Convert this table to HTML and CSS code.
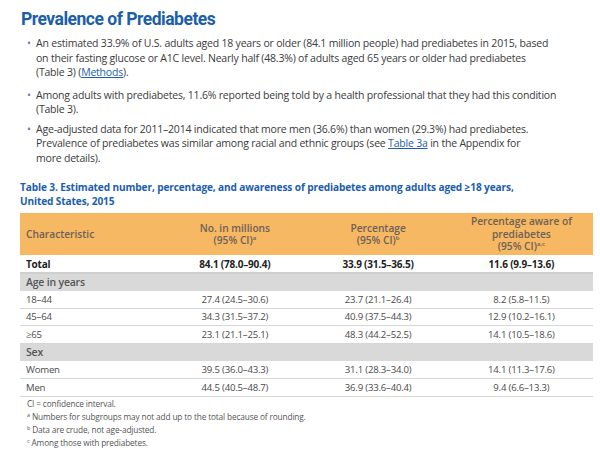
FILE: index.html
```html
<!DOCTYPE html>
<html>
<head>
<meta charset="utf-8">
<link rel="stylesheet" href="styles.css">
</head>
<body>
<div class="page">
  <h1 class="title">Prevalence of Prediabetes</h1>
  <ul class="bullets">
    <li>An estimated 33.9% of U.S. adults aged 18 years or older (84.1 million people) had prediabetes in 2015, based<br>on their fasting glucose or A1C level. Nearly half (48.3%) of adults aged 65 years or older had prediabetes<br>(Table 3) (<a class="link">Methods</a>).</li>
    <li class="second">Among adults with prediabetes, 11.6% reported being told by a health professional that they had this condition<br>(Table 3).</li>
    <li class="third">Age-adjusted data for 2011–2014 indicated that more men (36.6%) than women (29.3%) had prediabetes.<br>Prevalence of prediabetes was similar among racial and ethnic groups (see <a class="link">Table 3a</a> in the Appendix for<br>more details).</li>
  </ul>
  <div class="caption">Table 3. Estimated number, percentage, and awareness of prediabetes among adults aged ≥18 years,<br>United States, 2015</div>
  <table class="data">
    <thead>
      <tr>
        <th class="first">Characteristic</th>
        <th>No. in millions<br>(95% CI)<sup>a</sup></th>
        <th>Percentage<br>(95% CI)<sup>b</sup></th>
        <th>Percentage aware of<br>prediabetes<br>(95% CI)<sup>a,c</sup></th>
      </tr>
    </thead>
    <tbody>
      <tr class="total"><td class="first">Total</td><td>84.1 (78.0–90.4)</td><td>33.9 (31.5–36.5)</td><td>11.6 (9.9–13.6)</td></tr>
      <tr class="group"><td class="first">Age in years</td><td></td><td></td><td></td></tr>
      <tr><td class="first">18–44</td><td>27.4 (24.5–30.6)</td><td>23.7 (21.1–26.4)</td><td>8.2 (5.8–11.5)</td></tr>
      <tr><td class="first">45–64</td><td>34.3 (31.5–37.2)</td><td>40.9 (37.5–44.3)</td><td>12.9 (10.2–16.1)</td></tr>
      <tr><td class="first">≥65</td><td>23.1 (21.1–25.1)</td><td>48.3 (44.2–52.5)</td><td>14.1 (10.5–18.6)</td></tr>
      <tr class="group"><td class="first">Sex</td><td></td><td></td><td></td></tr>
      <tr><td class="first">Women</td><td>39.5 (36.0–43.3)</td><td>31.1 (28.3–34.0)</td><td>14.1 (11.3–17.6)</td></tr>
      <tr><td class="first">Men</td><td>44.5 (40.5–48.7)</td><td>36.9 (33.6–40.4)</td><td>9.4 (6.6–13.3)</td></tr>
    </tbody>
  </table>
  <div class="notes">
    <p>CI = confidence interval.</p>
    <p><sup>a</sup> Numbers for subgroups may not add up to the total because of rounding.</p>
    <p><sup>b</sup> Data are crude, not age-adjusted.</p>
    <p><sup>c</sup> Among those with prediabetes.</p>
  </div>
</div>
</body>
</html>
```
FILE: styles.css
```css
* { box-sizing: border-box; }
html, body { margin: 0; padding: 0; background: #fff; }
body { font-family: "Open Sans", "Noto Sans", sans-serif; color: #3a3a3a; }
.page { padding: 7px 0 0 20px; width: 600px; }
.title {
  margin: 0 0 0 1px;
  font-family: "Roboto", "Open Sans", sans-serif;
  font-size: 17.5px;
  line-height: 24px;
  font-weight: 700;
  letter-spacing: -0.5px;
  color: #1b5ea9;
}
.bullets { list-style: none; margin: 5px 0 0 0; padding: 0 0 0 16px; white-space: nowrap; }
.bullets li {
  position: relative;
  font-size: 10.5px;
  line-height: 14.5px;
  letter-spacing: -0.2px;
}
.bullets li.second { margin-top: 8px; }
.bullets li.third { margin-top: 5px; }
.bullets li::before {
  content: "•";
  position: absolute;
  left: -9px;
  top: 0;
  color: #6a7ea0;
}
.link { color: #1b5ea9; text-decoration: underline; }
.caption {
  margin-top: 15px;
  font-size: 10.1px;
  line-height: 14px;
  font-weight: 700;
  color: #1b5ea9;
  letter-spacing: -0.12px;
  white-space: nowrap;
}
.data {
  margin-top: 5px;
  width: 573px;
  border-collapse: collapse;
  table-layout: fixed;
  font-size: 9.6px;
}
.data th {
  background: #f6b862;
  color: #6d6157;
  font-weight: 600;
  font-size: 10.2px;
  line-height: 12.5px;
  height: 42px;
  text-align: center;
  vertical-align: middle;
  padding: 0 4px;
}
.data th.first { text-align: left; padding-left: 6px; }
.data sup { font-size: 6px; line-height: 0; vertical-align: 4px; }
.data td {
  text-align: center;
  height: 17.6px;
  padding: 0 4px;
  border-bottom: 1px solid #d6d6d6;
  color: #4a4a4a;
  letter-spacing: -0.2px;
}
.data td.first { text-align: left; padding-left: 6px; }
.data tr.total td { font-weight: 700; color: #222; border-bottom: 2px solid #cfcfcf; height: 18px; font-size: 10px; }
.data tr.group td { background: #d9d9d9; font-weight: 600; color: #555; font-size: 10.5px; border-bottom: none; }
.notes { margin-top: 0; padding-left: 7px; font-size: 8.3px; color: #555; letter-spacing: -0.15px; }
.notes p { margin: 0; line-height: 13.2px; }
.notes sup { font-size: 5.5px; vertical-align: 3px; line-height: 0; }
```
